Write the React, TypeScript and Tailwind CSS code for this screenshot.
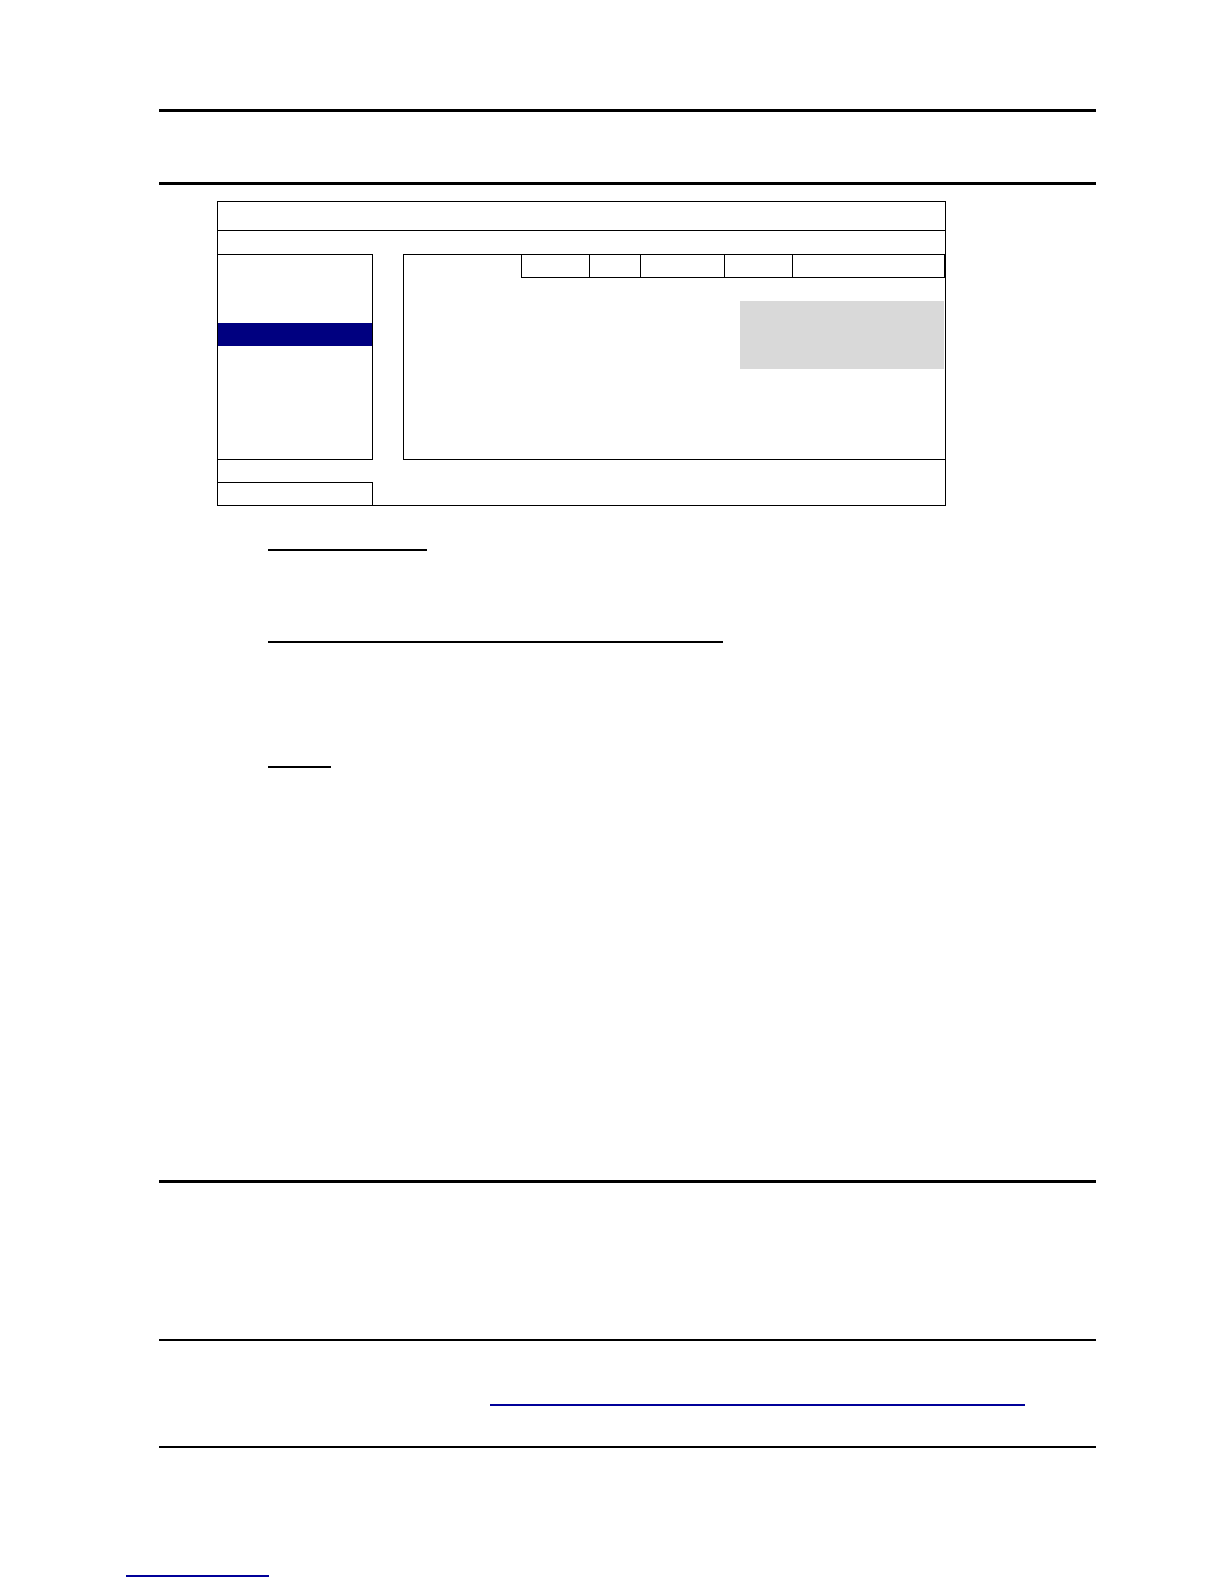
import React from 'react';

// Page of a manual: header rules, a menu screen diagram, section underlines and footer rules.
// The reference holds no readable text, only the drawn structure.

const MenuDiagram: React.FC = () => {
  return (
    <div className="ml-[217px] mt-[16px] w-[729px] h-[305px] border border-black flex flex-col">
      {/* title bar */}
      <div className="h-[29px] border-b border-black" />
      <div className="h-[23px]" />

      {/* menu list + settings panel */}
      <div className="h-[206px] flex">
        <div className="w-[155px] border-t border-r border-b border-black flex flex-col">
          <div className="h-[68px]" />
          <div className="h-[23px] bg-[#000080]" />
        </div>
        <div className="w-[30px]" />
        <div className="flex-1 border-l border-t border-b border-black flex flex-col">
          <div className="h-[23px] flex">
            <div className="w-[117px]" />
            <div className="w-[68px] border-l border-b border-black" />
            <div className="w-[51px] border-l border-b border-black" />
            <div className="w-[84px] border-l border-b border-black" />
            <div className="w-[68px] border-l border-b border-black" />
            <div className="w-[153px] border-l border-r border-b border-black" />
          </div>
          <div className="h-[23px]" />
          <div className="ml-[336px] w-[204px] h-[68px] bg-[#d9d9d9]" />
        </div>
      </div>

      <div className="h-[22px]" />
      {/* status box */}
      <div className="w-[155px] h-[23px] border-t border-r border-black" />
    </div>
  );
};

const App: React.FC = () => {
  return (
    <div className="w-[1224px] h-[1584px] bg-white flex flex-col pt-[109px] font-['Liberation_Sans',Arial,sans-serif]">
      {/* header */}
      <div className="ml-[159px] w-[937px] h-[3px] bg-black" />
      <div className="ml-[159px] mt-[70px] w-[937px] h-[3px] bg-black" />

      <MenuDiagram />

      {/* section headings (underlined) */}
      <div className="ml-[268px] mt-[43px] w-[159px] h-[2px] bg-black" />
      <div className="ml-[268px] mt-[90px] w-[455px] h-[2px] bg-black" />
      <div className="ml-[268px] mt-[123px] w-[63px] h-[2px] bg-black" />

      {/* notes block */}
      <div className="ml-[159px] mt-[412px] w-[937px] h-[3px] bg-black" />
      <div className="ml-[159px] mt-[156px] w-[937px] h-[2px] bg-black" />
      <div className="ml-[490px] mt-[63px] w-[535px] h-[2px] bg-[#000099]" />
      <div className="ml-[159px] mt-[40px] w-[937px] h-[2px] bg-black" />

      {/* footnote link */}
      <div className="ml-[126px] mt-[127px] w-[143px] h-[2px] bg-[#000099]" />
    </div>
  );
};

export default App;
